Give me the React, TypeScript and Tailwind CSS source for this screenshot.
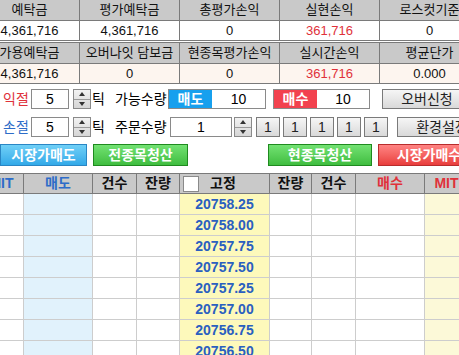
import React from 'react';

const font = { fontFamily: '"Liberation Sans", "Noto Sans CJK KR", sans-serif' };

const topRow1 = [
  { label: '예탁금', value: '4,361,716' },
  { label: '평가예탁금', value: '4,361,716' },
  { label: '총평가손익', value: '0' },
  { label: '실현손익', value: '361,716', red: true },
  { label: '로스컷기준', value: '0' },
];

const topRow2 = [
  { label: '가용예탁금', value: '4,361,716' },
  { label: '오버나잇 담보금', value: '0' },
  { label: '현종목평가손익', value: '0' },
  { label: '실시간손익', value: '361,716', red: true },
  { label: '평균단가', value: '0.000' },
];

const prices = ['20758.25', '20758.00', '20757.75', '20757.50', '20757.25', '20757.00', '20756.75', '20756.50'];

type Cell = { label: string; value: string; red?: boolean };

const InfoTable: React.FC<{ cells: Cell[]; valueBg: string; top?: boolean }> = ({ cells, valueBg, top }) => (
  <div className={`flex ml-[-20px] ${top ? 'border-t border-[#7a7a7a]' : ''}`}>
    {cells.map((c, i) => (
      <div key={i} className="w-[100px] shrink-0 border-r border-[#7a7a7a] flex flex-col">
        <div className="h-[21px] bg-[#c9c9c9] border-b border-[#7a7a7a] flex items-center justify-center text-[13px] text-[#111] whitespace-nowrap">
          {c.label}
        </div>
        <div className={`h-[20px] border-b border-[#7a7a7a] flex items-center justify-center text-[13px] ${valueBg} ${c.red ? 'text-[#e0313a]' : 'text-[#111]'}`}>
          {c.value}
        </div>
      </div>
    ))}
  </div>
);

const Spinner: React.FC = () => (
  <div className="w-[18px] h-[20px] shrink-0 border border-[#8a8a8a] flex flex-col bg-gradient-to-b from-[#f2f2f2] to-[#d6d6d6]">
    <div className="flex-1 flex items-center justify-center border-b border-[#9a9a9a]">
      <div className="w-0 h-0 border-l-[3px] border-r-[3px] border-b-[4px] border-l-transparent border-r-transparent border-b-[#333]" />
    </div>
    <div className="flex-1 flex items-center justify-center">
      <div className="w-0 h-0 border-l-[3px] border-r-[3px] border-t-[4px] border-l-transparent border-r-transparent border-t-[#333]" />
    </div>
  </div>
);

const GrayButton: React.FC<{ className?: string; children: React.ReactNode }> = ({ className = '', children }) => (
  <div className={`h-[20px] shrink-0 border border-[#7a7a7a] bg-gradient-to-b from-[#f6f6f6] to-[#d9d9d9] flex items-center justify-center text-[13px] text-[#222] whitespace-nowrap ${className}`}>
    {children}
  </div>
);

const headers = [
  { t: 'MIT', c: 'text-[#2d6cc8]' },
  { t: '매도', c: 'text-[#2d6cc8]' },
  { t: '건수', c: 'text-[#111]' },
  { t: '잔량', c: 'text-[#111]' },
  { t: '고정', c: 'text-[#111]' },
  { t: '잔량', c: 'text-[#111]' },
  { t: '건수', c: 'text-[#111]' },
  { t: '매수', c: 'text-[#e0313a]' },
  { t: 'MIT', c: 'text-[#e0313a]' },
];

const bodyBg = ['bg-white', 'bg-[#e1f2fc]', 'bg-white', 'bg-white', 'bg-[#fdf9bb]', 'bg-white', 'bg-white', 'bg-white', 'bg-[#fcf9d8]'];

export default function App() {
  return (
    <div className="w-[459px] h-[355px] overflow-hidden bg-white" style={font}>
      <InfoTable cells={topRow1} valueBg="bg-white" />
      <div className="h-[1px]" />
      <InfoTable cells={topRow2} valueBg="bg-[#fdf5ef]" top />

      {/* row 1 */}
      <div className="flex items-center mt-[5px] h-[20px] text-[14px] whitespace-nowrap">
        <span className="w-[31px] shrink-0 pl-[3px] text-[#e0313a]">익절</span>
        <div className="w-[38px] shrink-0 h-[20px] border border-[#8a8a8a] flex items-center justify-center">5</div>
        <div className="ml-[4px] shrink-0"><Spinner /></div>
        <span className="ml-[1px] w-[23px] shrink-0">틱</span>
        <span className="w-[53px] shrink-0">가능수량</span>
        <div className="flex shrink-0 h-[20px] w-[98px] border border-[#8a8a8a]">
          <div className="w-[43px] bg-[#17a0ee] text-white font-bold flex items-center justify-center">매도</div>
          <div className="flex-1 flex items-center justify-center">10</div>
        </div>
        <div className="flex shrink-0 h-[20px] w-[97px] border border-[#8a8a8a] ml-[7px]">
          <div className="w-[43px] bg-[#f2424f] text-white font-bold flex items-center justify-center">매수</div>
          <div className="flex-1 flex items-center justify-center">10</div>
        </div>
        <GrayButton className="ml-[12px] w-[90px] text-[14px]">오버신청</GrayButton>
      </div>

      {/* row 2 */}
      <div className="flex items-center mt-[8px] h-[20px] text-[14px] whitespace-nowrap">
        <span className="w-[31px] shrink-0 pl-[3px] text-[#2d6cc8]">손절</span>
        <div className="w-[38px] shrink-0 h-[20px] border border-[#8a8a8a] flex items-center justify-center">5</div>
        <div className="ml-[4px] shrink-0"><Spinner /></div>
        <span className="ml-[1px] w-[23px] shrink-0">틱</span>
        <span className="w-[55px] shrink-0">주문수량</span>
        <div className="w-[62px] shrink-0 h-[20px] border border-[#8a8a8a] flex items-center justify-center">1</div>
        <div className="ml-[2px] shrink-0"><Spinner /></div>
        <div className="flex shrink-0 gap-[3px] ml-[4px]">
          {[0, 1, 2, 3, 4].map((i) => (
            <GrayButton key={i} className="w-[24px] text-[14px]">1</GrayButton>
          ))}
        </div>
        <GrayButton className="ml-[9px] w-[90px] text-[14px]">환경설정</GrayButton>
      </div>

      {/* row 3 */}
      <div className="flex items-center mt-[7px] h-[22px] text-[14px] font-bold text-white whitespace-nowrap">
        <div className="w-[87px] shrink-0 h-[22px] border border-[#2a86c4] bg-gradient-to-b from-[#6fd0f7] to-[#31a9e8] flex items-center justify-center">시장가매도</div>
        <div className="ml-[6px] shrink-0 w-[95px] h-[22px] border border-[#1f8a1f] bg-gradient-to-b from-[#72e272] to-[#3fbd3f] flex items-center justify-center">전종목청산</div>
        <div className="ml-[80px] shrink-0 w-[104px] h-[22px] border border-[#1f8a1f] bg-gradient-to-b from-[#72e272] to-[#3fbd3f] flex items-center justify-center">현종목청산</div>
        <div className="ml-[6px] w-[102px] shrink-0 h-[22px] border border-[#b82c2c] bg-gradient-to-b from-[#ff8383] to-[#e83c3c] flex items-center justify-center">시장가매수</div>
      </div>

      {/* order grid */}
      <div className="mt-[7px] ml-[-20px] grid grid-cols-[44px_69px_44px_43px_90px_42px_44px_69px_44px] w-max">
        {headers.map((h, i) => (
          <div key={i} className={`h-[21px] bg-[#c9c9c9] border-t border-b border-r border-[#7a7a7a] flex items-center justify-center text-[14px] font-bold ${h.c}`}>
            {i === 4 ? (
              <div className="flex items-center w-full pl-[3px]">
                <div className="w-[16px] h-[16px] bg-white border border-[#8a8a8a]" />
                <span className="ml-[11px]">{h.t}</span>
              </div>
            ) : (
              h.t
            )}
          </div>
        ))}
        {prices.map((p) =>
          bodyBg.map((bg, i) => (
            <div key={p + i} className={`h-[21px] border-b border-r border-[#cdcdcd] ${bg} flex items-center justify-center text-[14px] font-bold text-[#2a5fc0]`}>
              {i === 4 ? p : ''}
            </div>
          ))
        )}
      </div>
    </div>
  );
}
